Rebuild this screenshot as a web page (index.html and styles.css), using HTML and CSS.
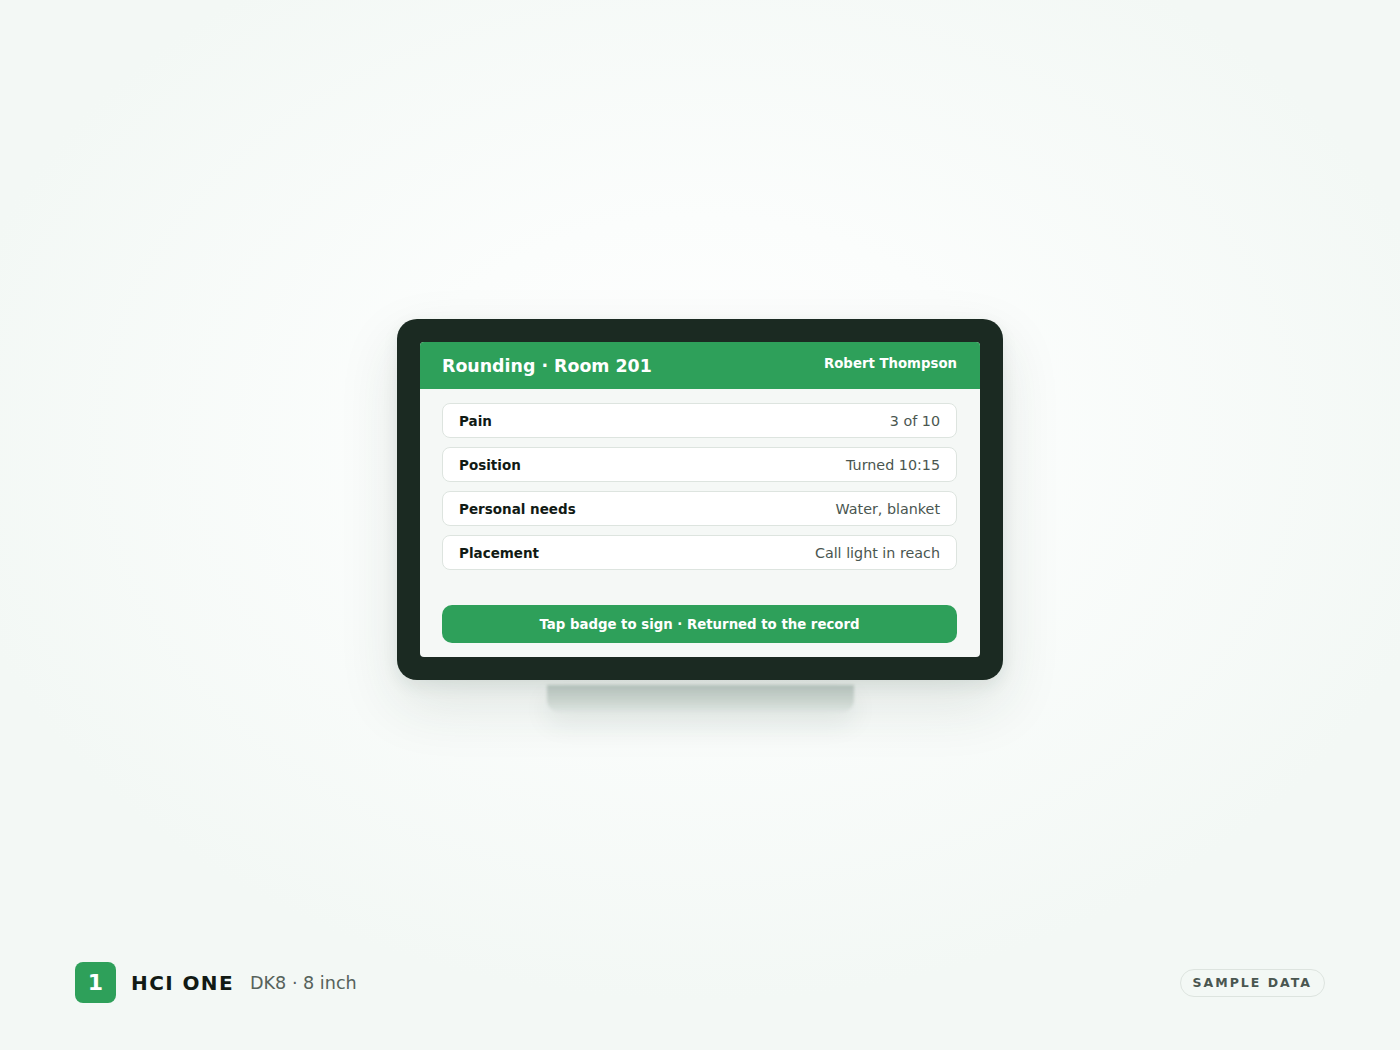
FILE: index.html
```html
<!DOCTYPE html>
<html lang="en">
<head>
  <meta charset="UTF-8" />
  <title>Rounding · Room 201</title>
  <link rel="stylesheet" href="styles.css">
</head>
<body>
  <div class="stage">
    <div class="device">
      <div class="bezel">
        <div class="screen">
          <div class="screen-head">
            <h1>Rounding · Room 201</h1>
            <span class="patient">Robert Thompson</span>
          </div>
          <div class="screen-body">
            <div class="rows">
              <div class="row"><span class="label">Pain</span><span class="value">3 of 10</span></div>
              <div class="row"><span class="label">Position</span><span class="value">Turned 10:15</span></div>
              <div class="row"><span class="label">Personal needs</span><span class="value">Water, blanket</span></div>
              <div class="row"><span class="label">Placement</span><span class="value">Call light in reach</span></div>
            </div>
            <div class="sign-btn">Tap badge to sign · Returned to the record</div>
          </div>
        </div>
      </div>
      <div class="stand"></div>
    </div>
  </div>
  <div class="footer">
    <div class="brand">
      <div class="brand-badge">1</div>
      <span class="brand-name">HCI ONE</span>
      <span class="brand-model">DK8 · 8 inch</span>
    </div>
    <div class="pill">SAMPLE DATA</div>
  </div>
</body>
</html>
```

FILE: styles.css
```css
html, body {
  margin: 0;
  padding: 0;
}

body {
  height: 1050px;
  display: flex;
  flex-direction: column;
  font-family: "DejaVu Sans", sans-serif;
  color: #17211b;
  background: radial-gradient(ellipse 760px 560px at 50% 42%, #ffffff 0%, #fbfdfc 40%, #f3f8f5 100%);
  overflow: hidden;
}

.stage {
  flex: 1;
  display: flex;
  justify-content: center;
  align-items: flex-start;
  padding-top: 319px;
}

.device {
  display: flex;
  flex-direction: column;
  align-items: center;
}

.bezel {
  width: 560px;
  padding: 23px;
  background: #1b2a22;
  border-radius: 20px;
  box-shadow: 0 24px 60px rgba(30, 60, 45, 0.12), 0 6px 16px rgba(30, 60, 45, 0.08);
  position: relative;
  z-index: 1;
}

.screen {
  background: #f5f8f6;
  border-radius: 4px;
  overflow: hidden;
  height: 315px;
  display: flex;
  flex-direction: column;
}

.screen-head {
  height: 47px;
  background: #2ea05a;
  display: flex;
  justify-content: space-between;
  align-items: center;
  padding: 0 23px 0 22px;
  color: #fff;
}

.screen-head h1 {
  margin: 0;
  font-size: 17.4px;
  font-weight: bold;
}

.patient {
  font-size: 13.3px;
  font-weight: bold;
  margin-top: -4px;
}

.screen-body {
  flex: 1;
  padding: 14px 23px 14px 22px;
  display: flex;
  flex-direction: column;
  justify-content: space-between;
}

.rows {
  display: flex;
  flex-direction: column;
  gap: 9px;
}

.row {
  height: 33px;
  background: #fff;
  border: 1px solid #dde4df;
  border-radius: 8px;
  display: flex;
  justify-content: space-between;
  align-items: center;
  padding: 0 16px;
}

.label {
  font-size: 13.5px;
  font-weight: bold;
  color: #111a14;
}

.value {
  font-size: 14.3px;
  color: #4a5650;
}

.sign-btn {
  height: 38px;
  background: #2ea05a;
  border-radius: 10px;
  color: #fff;
  font-size: 13.3px;
  font-weight: bold;
  display: flex;
  justify-content: center;
  align-items: center;
}

.stand {
  width: 307px;
  height: 27px;
  margin-top: 5px;
  background: linear-gradient(#c9d3ce, #d6dfda 60%, rgba(220, 228, 224, 0.6));
  border-radius: 0 0 12px 12px;
  box-shadow: 0 12px 26px rgba(30, 60, 45, 0.08);
  filter: blur(1.5px);
}

.footer {
  display: flex;
  justify-content: space-between;
  align-items: center;
  padding: 0 75px 47px 75px;
}

.brand {
  display: flex;
  align-items: center;
}

.brand-badge {
  width: 41px;
  height: 41px;
  border-radius: 8px;
  background: #2ea05a;
  color: #fff;
  font-size: 22px;
  font-weight: bold;
  display: flex;
  justify-content: center;
  align-items: center;
}

.brand-name {
  margin-left: 15px;
  font-size: 20px;
  font-weight: bold;
  letter-spacing: 1.4px;
  color: #111a14;
}

.brand-model {
  margin-left: 16px;
  font-size: 17.6px;
  color: #56625b;
}

.pill {
  height: 26px;
  padding: 0 12px 0 12px;
  border: 1px solid #dde4df;
  border-radius: 14px;
  display: flex;
  align-items: center;
  font-size: 12.5px;
  font-weight: bold;
  letter-spacing: 2px;
  color: #4a5650;
}
```
